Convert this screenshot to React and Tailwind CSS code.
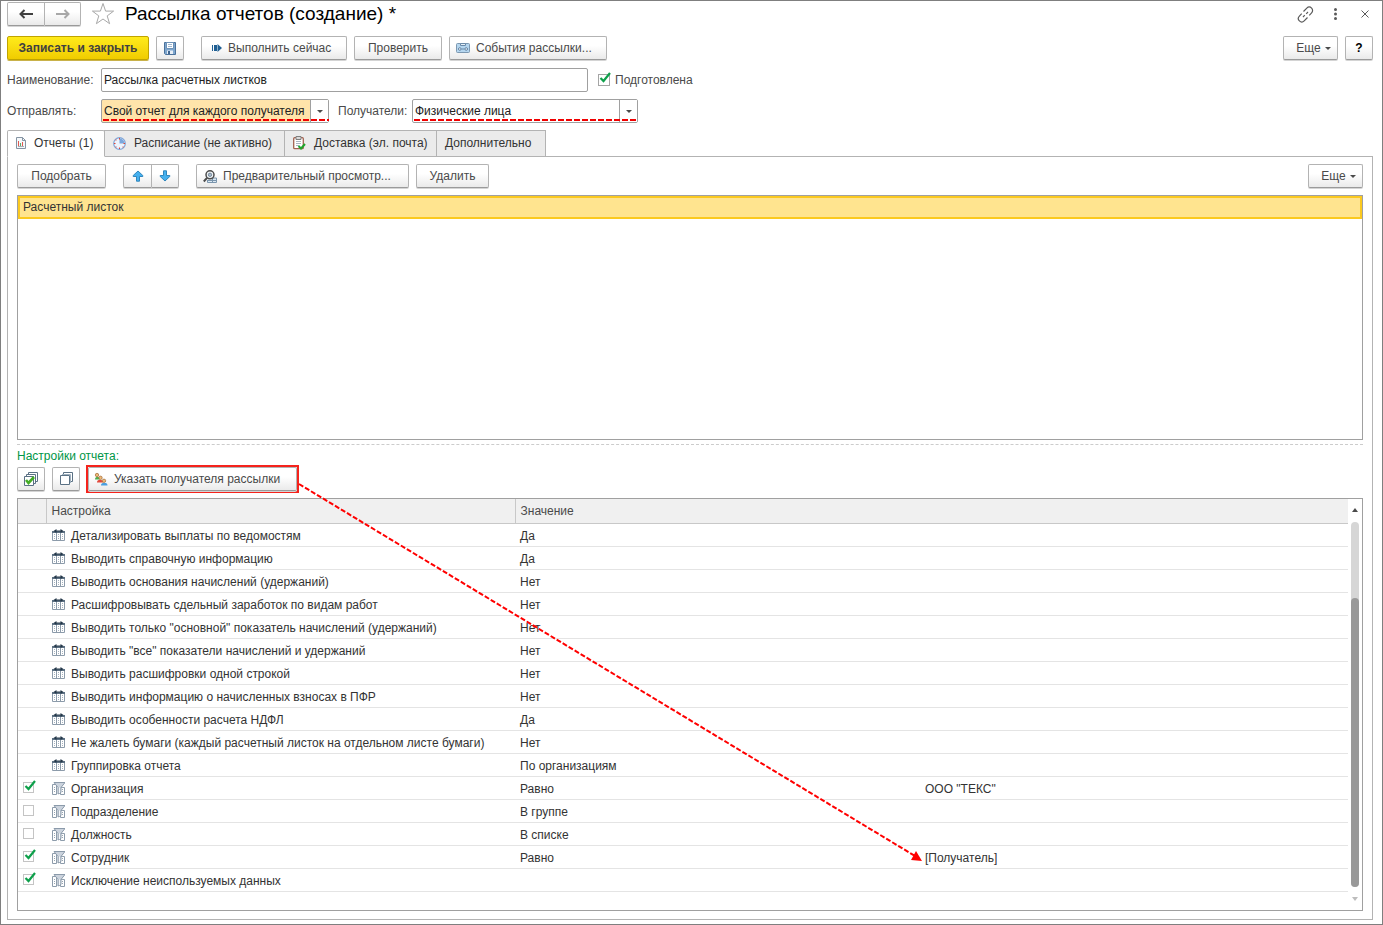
import React, { useState } from 'react';

const button =
  'flex h-6 items-center rounded-xs border border-[#b3b3b3] border-b-[#9a9a9a] bg-linear-to-b from-white from-40% to-[#eaeaea] text-[#4a4a4a] shadow-[0_1px_0_#d4d4d4]';

const settings = [
  { name: 'Детализировать выплаты по ведомостям', value: 'Да' },
  { name: 'Выводить справочную информацию', value: 'Да' },
  { name: 'Выводить основания начислений (удержаний)', value: 'Нет' },
  { name: 'Расшифровывать сдельный заработок по видам работ', value: 'Нет' },
  { name: 'Выводить только "основной" показатель начислений (удержаний)', value: 'Нет' },
  { name: 'Выводить "все" показатели начислений и удержаний', value: 'Нет' },
  { name: 'Выводить расшифровки одной строкой', value: 'Нет' },
  { name: 'Выводить информацию о начисленных взносах в ПФР', value: 'Нет' },
  { name: 'Выводить особенности расчета НДФЛ', value: 'Да' },
  { name: 'Не жалеть бумаги (каждый расчетный листок на отдельном листе бумаги)', value: 'Нет' },
  { name: 'Группировка отчета', value: 'По организациям' },
  { name: 'Организация', value: 'Равно', target: 'ООО "ТЕКС"', filter: true, checked: true },
  { name: 'Подразделение', value: 'В группе', filter: true, checked: false },
  { name: 'Должность', value: 'В списке', filter: true, checked: false },
  { name: 'Сотрудник', value: 'Равно', target: '[Получатель]', filter: true, checked: true },
  { name: 'Исключение неиспользуемых данных', value: '', filter: true, checked: true },
];

const ArrowIcon = ({ className, flip }) => (
  <svg className={className} width="14" height="10" viewBox="0 0 14 10" fill="none" stroke="currentColor" strokeWidth="2">
    <path d={flip ? 'M0 5h12M8.500 1l4 4-4 4' : 'M14 5H2M5.500 1l-4 4 4 4'} />
  </svg>
);

const StarIcon = () => (
  <svg width="24" height="24" viewBox="0 0 24 24" fill="none" stroke="#a8a8a8">
    <path d="M12 1.500l2.600 7.600h8l-6.400 4.800 2.400 7.800L12 17l-6.600 4.700 2.400-7.800-6.400-4.800h8z" />
  </svg>
);

const LinkIcon = () => (
  <svg width="17" height="17" viewBox="0 0 17 17" fill="none" stroke="#5a5a5a" strokeWidth="1.200">
    <path d="M6.500 5.500l3.300-3.400a3.300 3.300 0 0 1 4.800 4.800l-2.300 2.400M10.500 11.500l-3.300 3.400a3.300 3.300 0 0 1-4.800-4.800l2.300-2.400M6 11l1.800-1.800M9.200 7.800L11 6" />
  </svg>
);

const SaveIcon = () => (
  <svg width="12" height="13" viewBox="0 0 12 13">
    <path d="M.5.5h11v12h-10l-1-1z" fill="#7ea6cd" stroke="#4a719b" />
    <path d="M2.500.5h7v6h-7z" fill="#fff" stroke="#6d92b8" />
    <path d="M4 2.500h4M4 4.500h4" stroke="#9db7d1" />
    <path d="M3 8.500h6V12H3z" fill="#e7eef6" />
    <path d="M4 9h2v3H4z" fill="#3f6590" />
  </svg>
);

const RunIcon = () => (
  <svg width="10" height="8" viewBox="0 0 10 8" fill="#1f5f93">
    <path d="M0 1h1v6H0zM2 1h3v6H2zM5.500 0L10 4 5.500 8z" />
  </svg>
);

const EventsIcon = () => (
  <svg width="14" height="10" viewBox="0 0 14 10">
    <rect x=".5" y=".5" width="13" height="9" rx="1" fill="#b5d6ef" stroke="#7c98b1" />
    <path d="M4.500.5h5v2h-5z" fill="#e8f1f8" stroke="#6b8aa8" />
    <path d="M5.500 6h3" stroke="#6b8aa8" />
    <circle cx="3.800" cy="6" r="1.300" fill="#fff" stroke="#5d7f9f" />
    <circle cx="10.200" cy="6" r="1.300" fill="#fff" stroke="#5d7f9f" />
  </svg>
);

const ReportIcon = () => (
  <svg width="10" height="12" viewBox="0 0 10 12">
    <path d="M.5.5h6l3 3v8h-9z" fill="#f5f8fa" stroke="#8594a3" />
    <path d="M6.500.5v3h3" fill="none" stroke="#8594a3" />
    <path d="M2.500 4v5M6.500 5v4" stroke="#e05a4f" />
    <path d="M4.500 6v3" stroke="#5fa868" />
    <path d="M2 9.500h6" stroke="#a5b0ba" />
  </svg>
);

const ClockIcon = () => (
  <svg width="13" height="13" viewBox="0 0 13 13">
    <circle cx="6.500" cy="6.500" r="5.800" fill="#eef4fc" stroke="#7fa5d8" strokeWidth="1.200" />
    <path d="M6.500 6.500v-5a5 5 0 0 1 5 5z" fill="#7ba7dd" />
    <path d="M6 1h1v1.500H6zM6 10.500h1V12H6zM1 6h1.500v1H1zM10.500 6H12v1h-1.500zM2.500 2.500h1v1h-1zM2.500 9.500h1v1h-1zM9.500 9.500h1v1h-1z" fill="#e04437" />
  </svg>
);

const DeliveryIcon = () => (
  <svg width="13" height="14" viewBox="0 0 13 14">
    <rect x=".7" y="1.700" width="9.600" height="11" rx="1" fill="#fff" stroke="#a2624f" strokeWidth="1.300" />
    <path d="M3 .5h5v3H3z" fill="#d9d9d9" stroke="#7f7f7f" />
    <path d="M3 5.500h5M3 7.500h5M3 9.500h3" stroke="#a9b5c0" />
    <path d="M5.500 10l2.500 2.500 4-4.500" fill="none" stroke="#1fa52c" strokeWidth="2" />
  </svg>
);

const MoveIcon = ({ down }) => (
  <svg width="12" height="12" viewBox="0 0 12 12" fill="#45b0ee" stroke="#2f86bd">
    <path d={down ? 'M4.500.8h3v4.700h3.300v1L6 11 1.200 6.500v-1h3.300z' : 'M4.500 11.200h3V6.500h3.300v-1L6 1 1.200 5.500v1h3.300z'} />
  </svg>
);

const PreviewIcon = () => (
  <svg width="14" height="13" viewBox="0 0 14 13">
    <path d="M6 8h7.500v4.500H4.500V10" fill="#dbe8f2" stroke="#7a95ad" />
    <path d="M5 10.500h8M9.500 8v4" stroke="#7a95ad" />
    <circle cx="7" cy="4.800" r="4" fill="#f1f5f8" stroke="#4c4c4c" strokeWidth="1.500" />
    <circle cx="7" cy="4.800" r="1.700" fill="#a9bccd" stroke="#66798a" strokeWidth=".8" />
    <path d="M4 7.800L.8 11.500" stroke="#4c4c4c" strokeWidth="2" />
  </svg>
);

const CheckAllIcon = () => (
  <svg width="14" height="14" viewBox="0 0 14 14" stroke="#5a7184">
    <path d="M4.500 2.500v-2h9v9h-2" fill="#fff" />
    <path d="M2.500 4.500v-2h9v9h-2" fill="#fff" />
    <path d="M.5 4.500h9v9h-9z" fill="#fff" />
    <path d="M2 8l2.500 3L10 5" fill="none" stroke="#44ad26" strokeWidth="2.600" />
  </svg>
);

const UncheckAllIcon = () => (
  <svg width="13" height="13" viewBox="0 0 13 13" fill="#fff" stroke="#5a7184">
    <path d="M3.500 2.500v-2h9v9h-2" />
    <path d="M.5 3.500h9v9h-9z" />
    <path d="M2 2.500h8.500V11" fill="none" stroke="#9fb0be" />
  </svg>
);

const PeopleIcon = () => (
  <svg width="14" height="14" viewBox="0 0 14 14">
    <path d="M1 7.500C1 5.500 2 5 3.500 5S6 5.500 6 7.500z" fill="#4fae4f" />
    <circle cx="3" cy="3" r="1.700" fill="#efb877" stroke="#a06a35" strokeWidth=".7" />
    <path d="M3 10.500C3 8.500 4 8 6 8s3 .5 3 2.500z" fill="#e2493c" />
    <circle cx="6.500" cy="5.800" r="1.700" fill="#efb877" stroke="#a06a35" strokeWidth=".7" />
    <path d="M7 13.500C7 11.500 8 11 10.300 11s3.200.5 3.200 2.500z" fill="#4b9fe0" />
    <circle cx="10" cy="8.800" r="1.700" fill="#efb877" stroke="#a06a35" strokeWidth=".7" />
  </svg>
);

const ColumnsIcon = () => (
  <svg width="13" height="12" viewBox="0 0 13 12">
    <path d="M.5 2.500h12v9H.5z" fill="#fff" stroke="#8c9baa" />
    <path d="M4.500 3v9M8.500 3v9" stroke="#8c9baa" />
    <path d="M2.500 5v6M6.500 5v6M10.500 5v6" stroke="#a5b2be" strokeDasharray="1 1" />
    <path d="M0 2h13v2H0z" fill="#5d7183" />
    <path d="M1.500 2L4.500 0v1.500h4V0l3 2-3 2V2.500h-4V4z" fill="#24384a" />
  </svg>
);

const FilterIcon = () => (
  <svg width="13" height="13" viewBox="0 0 13 13">
    <path d="M.5 2.500h4v10h-4zM8.500 5.500h4v7h-4z" fill="#fff" stroke="#8d9cab" />
    <path d="M2.500 5v6M10.500 5v6" stroke="#97a5b2" strokeDasharray="1 1" />
    <path d="M2 .5h11L9 5.500v5L6 12V5.500z" fill="#cbd3dd" stroke="#8b9aaa" />
    <path d="M7.500 5.500V11" stroke="#f5f7f9" />
  </svg>
);

const Check = ({ label, checked, onChange, small }) => (
  <span className="relative block">
    <input
      type="checkbox"
      aria-label={label}
      checked={checked}
      onChange={onChange}
      className={`block appearance-none border bg-white ${small ? 'size-[11px] border-[#c4c4c4]' : 'size-3 border-[#a5a5a5]'}`}
    />
    {checked && (
      <svg className="pointer-events-none absolute -top-1 left-0" width="14" height="14" viewBox="0 0 14 14">
        <path d="M2.500 8l3 3L12 3" fill="none" stroke="#0ea04b" strokeWidth="2.200" />
      </svg>
    )}
  </span>
);

const Caret = () => (
  <svg width="6" height="3" viewBox="0 0 6 3" fill="#4a4a4a">
    <path d="M0 0h6L3 3z" />
  </svg>
);

const SelectField = ({ id, options, className }) => (
  <div className="relative">
    <select
      id={id}
      className={`block h-6 appearance-none rounded-xs border border-[#a0a0a0] pl-0.5 text-[#222] ${className}`}
    >
      {options.map((o) => (
        <option key={o}>{o}</option>
      ))}
    </select>
    <span className="pointer-events-none absolute inset-y-px right-px flex w-[18px] items-center justify-center border-l border-[#a0a0a0] bg-white">
      <Caret />
    </span>
    <svg className="pointer-events-none absolute bottom-0.5 left-0.5 w-[calc(100%-2px)]" height="2">
      <line x1="0" y1="1" x2="100%" y2="1" stroke="#f00000" strokeWidth="2" strokeDasharray="6 2" />
    </svg>
  </div>
);

const tabs = [
  { title: 'Отчеты (1)', icon: <ReportIcon />, className: 'w-[98px]' },
  { title: 'Расписание (не активно)', icon: <ClockIcon />, className: 'w-[181px]' },
  { title: 'Доставка (эл. почта)', icon: <DeliveryIcon />, className: 'w-[153px]' },
  { title: 'Дополнительно', className: 'w-[110px]' },
];

const App = () => {
  const [activeTab, setActiveTab] = useState(0);
  const [ready, setReady] = useState(true);
  const [name, setName] = useState('Рассылка расчетных листков');
  const [rows, setRows] = useState(settings);

  const toggleRow = (index) => {
    setRows(rows.map((row, i) => (i === index ? { ...row, checked: !row.checked } : row)));
  };

  const setAll = (checked) => {
    setRows(rows.map((row) => (row.filter ? { ...row, checked } : row)));
  };

  return (
    <div className="flex min-h-screen flex-col border border-[#7f7f7f] bg-white px-1.5 pb-1 font-['Liberation_Sans',Arial,sans-serif] text-[12px] leading-4 text-[#4a4a4a]">
      <header className="flex items-center pt-px">
        <div className="flex">
          <button type="button" aria-label="Назад" className={`${button} w-[38px] justify-center rounded-r-none`}>
            <ArrowIcon className="text-[#404040]" />
          </button>
          <button type="button" aria-label="Вперед" className={`${button} w-9 justify-center rounded-l-none border-l-0`}>
            <ArrowIcon flip className="text-[#a8a8a8]" />
          </button>
        </div>
        <button type="button" aria-label="В избранное" className="ml-2.5">
          <StarIcon />
        </button>
        <h1 className="ml-2.5 text-[19px] leading-6 text-black">Рассылка отчетов (создание) *</h1>
        <div className="ml-auto flex items-center gap-4 pr-[7px]">
          <button type="button" aria-label="Получить ссылку">
            <LinkIcon />
          </button>
          <button type="button" aria-label="Меню" className="px-1">
            <svg width="3" height="12" viewBox="0 0 3 12" fill="#5a5a5a">
              <circle cx="1.500" cy="1.500" r="1.500" />
              <circle cx="1.500" cy="6" r="1.500" />
              <circle cx="1.500" cy="10.500" r="1.500" />
            </svg>
          </button>
          <button type="button" aria-label="Закрыть" className="pl-1">
            <svg width="8" height="8" viewBox="0 0 8 8" stroke="#5a5a5a">
              <path d="M.5.5l7 7M7.500.5l-7 7" />
            </svg>
          </button>
        </div>
      </header>

      <div className="mt-2.5 flex items-center">
        <button
          type="button"
          className="h-6 w-[142px] rounded-xs border border-[#c0a400] bg-linear-to-b from-[#ffeb1a] to-[#f0cc00] font-bold text-[#404040] shadow-[0_1px_0_#c9b24a]"
        >
          Записать и закрыть
        </button>
        <button type="button" aria-label="Записать" className={`${button} ml-[7px] w-7 justify-center`}>
          <SaveIcon />
        </button>
        <button type="button" className={`${button} ml-[17px] w-[146px] gap-1.5 pl-2.5`}>
          <RunIcon />
          Выполнить сейчас
        </button>
        <button type="button" className={`${button} ml-[7px] w-[88px] justify-center`}>Проверить</button>
        <button type="button" className={`${button} ml-[7px] w-[158px] gap-1.5 pl-1.5`}>
          <EventsIcon />
          События рассылки...
        </button>
        <button type="button" className={`${button} ml-auto w-[55px] justify-center gap-1 pl-1.5`}>
          Еще
          <Caret />
        </button>
        <button type="button" className={`${button} ml-[7px] mr-[3px] w-7 justify-center font-bold text-black`}>?</button>
      </div>

      <div className="mt-2 flex items-center">
        <label htmlFor="name" className="w-[94px]">Наименование:</label>
        <input
          id="name"
          value={name}
          onChange={(e) => setName(e.target.value)}
          className="h-6 w-[487px] rounded-xs border border-[#a0a0a0] px-0.5 text-[#222]"
        />
        <label className="ml-2.5 flex items-center gap-[5px]">
          <Check label="Подготовлена" checked={ready} onChange={() => setReady(!ready)} />
          Подготовлена
        </label>
      </div>

      <div className="mt-[7px] flex items-center">
        <label htmlFor="mode" className="w-[94px]">Отправлять:</label>
        <SelectField id="mode" className="w-[228px] bg-[#ffe4aa]" options={['Свой отчет для каждого получателя']} />
        <label htmlFor="recipients" className="ml-[9px] w-[74px]">Получатели:</label>
        <SelectField id="recipients" className="w-[226px] bg-white" options={['Физические лица']} />
      </div>

      <div role="tablist" className="mt-[7px] flex">
        {tabs.map((tab, i) => (
          <button
            key={tab.title}
            type="button"
            role="tab"
            aria-selected={activeTab === i}
            onClick={() => setActiveTab(i)}
            className={`relative -mb-px flex h-[27px] items-center gap-2 border border-[#b3b3b3] pb-px pl-2 text-[#333] not-first:-ml-px ${tab.className} ${
              activeTab === i ? 'z-10 rounded-t-xs border-b-white bg-white' : 'bg-[#ebebeb]'
            }`}
          >
            {tab.icon}
            {tab.title}
          </button>
        ))}
      </div>

      <main className="mr-[3px] flex flex-1 flex-col border border-[#b3b3b3] px-[9px] pt-[7px] pb-2">
        <div className="flex items-center">
          <button type="button" className={`${button} w-[89px] justify-center`}>Подобрать</button>
          <div className="ml-[17px] flex">
            <button type="button" aria-label="Вверх" className={`${button} w-[29px] justify-center rounded-r-none`}>
              <MoveIcon />
            </button>
            <button type="button" aria-label="Вниз" className={`${button} w-[27px] justify-center rounded-l-none border-l-0`}>
              <MoveIcon down />
            </button>
          </div>
          <button type="button" className={`${button} ml-[17px] w-[213px] gap-1.5 pl-1.5`}>
            <PreviewIcon />
            Предварительный просмотр...
          </button>
          <button type="button" className={`${button} ml-[7px] w-[73px] justify-center`}>Удалить</button>
          <button type="button" className={`${button} ml-auto w-[55px] justify-center gap-1 pl-1.5`}>
            Еще
            <Caret />
          </button>
        </div>

        <ul className="mt-[7px] flex-1 border border-[#a0a0a0]">
          <li className="border-2 border-[#fbc91f] bg-[#ffe48f] px-[3px] pt-px pb-0.5 text-[#333]">Расчетный листок</li>
        </ul>

        <div className="mt-1 border-t border-dashed border-[#cccccc]" />

        <section className="relative">
          <h2 className="mt-[3px] text-[#009646]">Настройки отчета:</h2>
          <div className="mt-[3px] flex items-center">
            <button type="button" aria-label="Установить флажки" onClick={() => setAll(true)} className={`${button} w-7 justify-center`}>
              <CheckAllIcon />
            </button>
            <button type="button" aria-label="Снять флажки" onClick={() => setAll(false)} className={`${button} ml-[7px] w-7 justify-center`}>
              <UncheckAllIcon />
            </button>
            <div className="ml-1.5 -my-0.5 border-2 border-[#f5231c]">
              <button type="button" className={`${button} w-[209px] gap-1.5 pl-[5px]`}>
                <PeopleIcon />
                Указать получателя рассылки
              </button>
            </div>
          </div>

          <div className="mt-[7px] flex border border-[#a0a0a0] pb-[18px]">
            <table className="flex-1 table-fixed border-collapse text-left text-[#333]">
              <colgroup>
                <col className="w-7" />
                <col className="w-[469px]" />
                <col className="w-[405px]" />
                <col />
              </colgroup>
              <thead>
                <tr className="h-[25px] border-b border-[#c8c8c8] bg-[#f0f0f0] text-[#4a4a4a]">
                  <th aria-label="Использование" className="border-r border-[#c8c8c8]" />
                  <th className="border-r border-[#c8c8c8] pl-[5px] font-normal">Настройка</th>
                  <th colSpan={2} className="pl-[5px] font-normal">Значение</th>
                </tr>
              </thead>
              <tbody>
                {rows.map((row, i) => (
                  <tr key={row.name} className="h-[23px] border-b border-[#e4e4e4]">
                    <td className="pb-0.5 pl-[5px]">
                      {row.filter && (
                        <Check small label={row.name} checked={row.checked} onChange={() => toggleRow(i)} />
                      )}
                    </td>
                    <td className="pl-1.5">
                      <div className="flex items-center gap-1.5">
                        {row.filter ? <FilterIcon /> : <ColumnsIcon />}
                        <span className="pt-px">{row.name}</span>
                      </div>
                    </td>
                    <td className="pt-px pl-[5px]">{row.value}</td>
                    <td className="pt-px pl-[5px]">{row.target}</td>
                  </tr>
                ))}
              </tbody>
            </table>

            {/* vertical scrollbar */}
            <div className="-mb-[9px] flex w-3.5 flex-col items-center pt-[9px]">
              <svg width="6" height="4" viewBox="0 0 6 4" fill="#4a4a4a">
                <path d="M0 4h6L3 0z" />
              </svg>
              <div className="mt-2.5 flex w-2 flex-1 flex-col rounded-full bg-[#d6d6d6] pt-[76px]">
                <div className="flex-1 rounded-full bg-[#999999]" />
              </div>
              <svg className="mt-2.5" width="6" height="4" viewBox="0 0 6 4" fill="#bdbdbd">
                <path d="M0 0h6L3 4z" />
              </svg>
            </div>
          </div>

          {/* pointer from the recipient button to the employee row */}
          <svg className="pointer-events-none absolute top-0 left-0" width="920" height="430" viewBox="0 0 920 430">
            <line x1="282" y1="39" x2="898" y2="411" stroke="#f00" strokeWidth="2" strokeDasharray="5 2" />
            <path d="M905 416l-11-1 5-9z" fill="#f00" />
          </svg>
        </section>
      </main>
    </div>
  );
};

export default App;
